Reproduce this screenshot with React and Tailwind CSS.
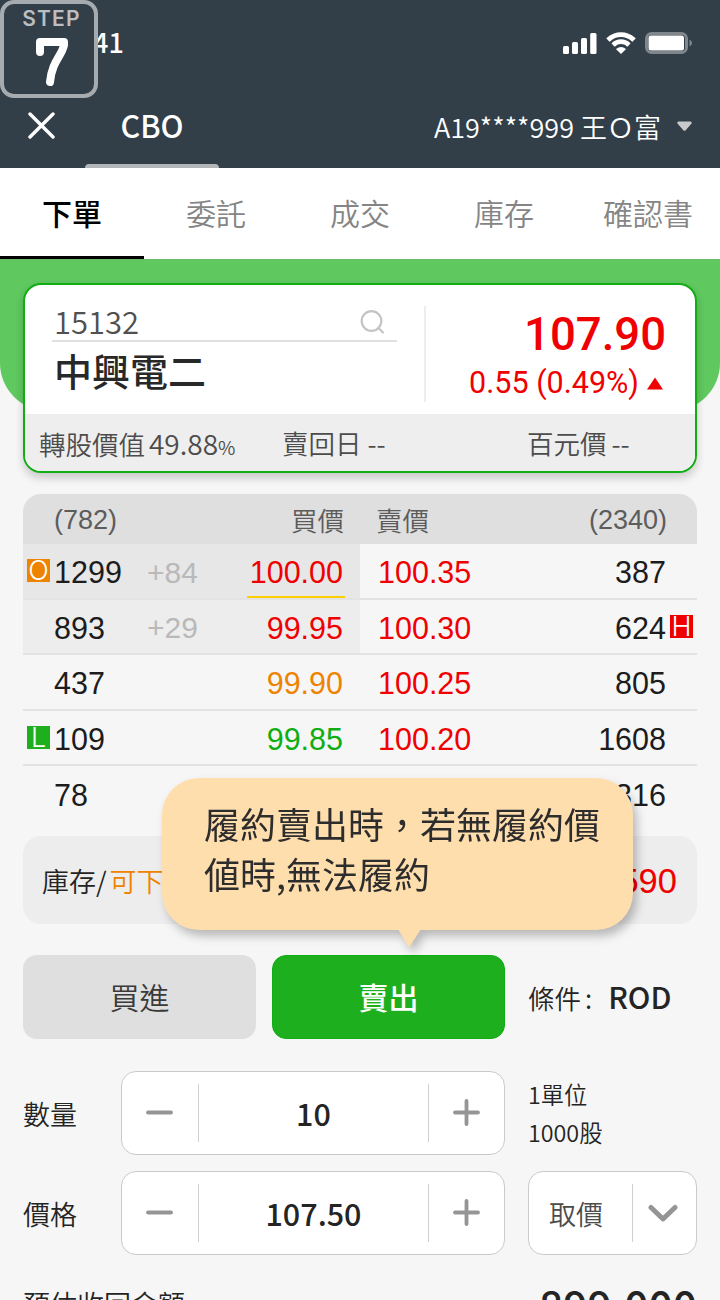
const CJK = "font-['Noto_Sans_CJK_TC',sans-serif]";
const ARIAL = "font-['Liberation_Sans','Noto_Sans_CJK_TC',sans-serif]";

const tabs = ["下單", "委託", "成交", "庫存", "確認書"];

const rows = [
  { bidQty: "1299", delta: "+84", bid: "100.00", bidColor: "text-[#f00000]", ask: "100.35", askQty: "387", left: "O", leftBg: "bg-[#ee8300]", shade: "bg-[#e7e7e7]", last: true },
  { bidQty: "893", delta: "+29", bid: "99.95", bidColor: "text-[#f00000]", ask: "100.30", askQty: "624", right: "H", shade: "bg-[#ededed]" },
  { bidQty: "437", bid: "99.90", bidColor: "text-[#ee8300]", ask: "100.25", askQty: "805" },
  { bidQty: "109", bid: "99.85", bidColor: "text-[#0eae12]", ask: "100.20", askQty: "1608", left: "L", leftBg: "bg-[#1eaf1e]" },
  { bidQty: "78", askQty: "316" },
];

function StepBadge() {
  return (
    <div className="absolute left-0 top-0 flex h-[98px] w-[98px] flex-col items-center rounded-[14px] border-4 border-[#a6abaf] bg-[#323e48]">
      <span className="mt-[3px] pl-[5px] font-['Inter',sans-serif] text-[21px] font-semibold leading-6 tracking-[1.2px] text-[#bcbfc1]">STEP</span>
      <svg className="ml-[6px] mt-[6px]" width="34" height="50" viewBox="0 0 34 50" fill="none" stroke="#fff" strokeWidth="8" strokeLinecap="round" strokeLinejoin="round">
        <path d="M5 15V5h24v3C27 19 17 24 15 45" />
      </svg>
    </div>
  );
}

function Header() {
  return (
    <header className="relative h-[168px] bg-[#323e48] text-white">
      <div className="flex h-[84px] items-center justify-between pl-[93px] pr-[27px] pt-0.5">
        <span className={`${CJK} -mt-[3px] text-[27px] font-medium leading-[40px]`}>41</span>
        <div className="flex items-center">
          <svg width="34" height="21" viewBox="0 0 34 21" fill="#fff">
            <rect x="0" y="13" width="6" height="8" rx="1.5" />
            <rect x="9" y="9" width="6" height="12" rx="1.5" />
            <rect x="18" y="5" width="6" height="16" rx="1.5" />
            <rect x="27.200" y="0" width="6.300" height="21" rx="1.5" />
          </svg>
          <svg className="ml-[9px]" width="30" height="22" viewBox="0 0 30 22" fill="#fff">
            <path d="M15 4.300c4.100 0 8 1.600 10.900 4.400.3.300.6.300.8 0l2.700-2.700c.3-.3.300-.6 0-.9C21.400-2.500 8.600-2.500.6 5.100c-.3.300-.3.600 0 .9l2.700 2.700c.2.300.5.300.8 0A15.800 15.800 0 0 1 15 4.300Z" transform="translate(0 .8)" />
            <path d="M15 11.800c2.200 0 4.300.8 5.900 2.300.3.200.6.200.8 0l2.500-2.600c.3-.2.300-.6 0-.8a13.300 13.300 0 0 0-18.400 0c-.3.200-.3.600 0 .8l2.500 2.600c.2.200.5.200.8 0a8.700 8.700 0 0 1 5.900-2.300Z" transform="translate(0 .3)" />
            <path d="m15 22 4.600-4.500c.2-.2.200-.5 0-.7a7.100 7.100 0 0 0-9.200 0c-.2.200-.2.500 0 .7L15 22Z" />
          </svg>
          <svg className="ml-[9px]" width="48" height="22" viewBox="0 0 48 22">
            <rect x="1.500" y="1.500" width="40" height="19" rx="5" fill="none" stroke="#7f868c" strokeWidth="3" />
            <rect x="3.500" y="3.500" width="35.500" height="15" rx="2.500" fill="#fff" />
            <path d="M44.500 7.500v7c1.500-.7 2.500-2 2.500-3.500s-1-2.800-2.500-3.500Z" fill="#7f868c" />
          </svg>
        </div>
      </div>
      <div className={`flex h-[84px] items-stretch ${CJK}`}>
        <div className="flex w-[85px] items-center pb-0.5 pl-7">
          <svg width="27" height="27" viewBox="0 0 27 27" stroke="#fff" strokeWidth="3.400" strokeLinecap="round">
            <path d="M2 2l23 23M25 2L2 25" />
          </svg>
        </div>
        <div className="flex w-[134px] flex-col items-center justify-between">
          <span className="mt-[18px] text-[30.500px] font-medium leading-[46px]">CBO</span>
          <i className="h-1 w-full rounded-t-sm bg-[#b3b6b8]" />
        </div>
        <div className="flex flex-1 items-center justify-end pr-7">
          <span className="pt-0.5 text-[27px] font-[350] leading-10">A19****999 王Ｏ富</span>
          <svg className="ml-4" width="15" height="11" viewBox="0 0 15 11">
            <path d="M2 .5h11c1.800 0 2.200 1.600 1.100 2.600L8.700 9.200c-.7.800-1.700.8-2.400 0L.9 3.100C-.2 2.100.3.500 2 .5Z" fill="#c8cacc" />
          </svg>
        </div>
      </div>
      <StepBadge />
    </header>
  );
}

function Tabs() {
  return (
    <nav className={`flex h-[91px] bg-white text-[30px] ${CJK}`}>
      {tabs.map((t, i) => (
        <div key={t} className={i === 0 ? "flex w-36 items-center justify-center border-b-[3px] border-black pt-px font-medium text-black" : "flex w-36 items-center justify-center pb-0.5 font-[350] text-[#858585]"}>
          {t}
        </div>
      ))}
    </nav>
  );
}

function QuoteCard() {
  return (
    <section className={`relative mx-[23px] -mt-32 flex h-[190px] flex-col overflow-hidden rounded-[18px] border-2 border-[#12ad15] bg-white shadow-[0_5px_9px_rgba(0,0,0,0.18)] ${CJK}`}>
      <div className="flex h-[129px]">
        <div className="ml-[27px] w-[345px]">
          <div className="flex h-[57px] items-start justify-between border-b-2 border-[#e0e0e0] pl-[2px] pr-[11px] pt-[14px]">
            <span className="text-[31px] font-[350] leading-[44px] text-[#505050]">15132</span>
            <svg className="mt-[10px]" width="26" height="26" viewBox="0 0 26 26" fill="none" stroke="#c4c4c4" strokeWidth="2.200" strokeLinecap="round">
              <circle cx="11.500" cy="12" r="9.800" />
              <path d="M18.500 19l4.500 4.500" />
            </svg>
          </div>
          <div className="pl-0.5 text-[38px] font-medium leading-[56px] text-[#282828]">中興電二</div>
        </div>
        <i className="ml-[27px] mt-[21px] h-24 w-0.5 bg-[#ededed]" />
        <div className="flex flex-1 flex-col items-end pr-[29px] font-['Roboto',sans-serif] text-[#f00000]">
          <span className="mt-[22px] text-[45.500px] font-medium leading-[56px]">107.90</span>
          <span className="flex items-center text-[30.500px] leading-10">
            0.55 (0.49%)
            <svg className="ml-[8px] mr-[3px]" width="16" height="13" viewBox="0 0 16 13"><path d="M8 .5l8 12H0z" fill="#f00000" /></svg>
          </span>
        </div>
      </div>
      <div className="flex flex-1 items-center bg-[#eee] pl-3.5 text-[26.500px] font-[350] text-[#4c4c4c]">
        <div className="flex w-[243px] items-baseline">轉股價值<span className="ml-1 text-[28px]">49.88</span><span className="text-[19px]">%</span></div>
        <div className="w-[245px]">賣回日<span className="ml-[6px]">--</span></div>
        <div>百元價<span className="ml-[5px]">--</span></div>
      </div>
    </section>
  );
}

function Mark({ letter, color }) {
  return (
    <span className={`flex h-[23px] w-[23px] items-center justify-center font-['Inter',sans-serif] text-[27px] font-light leading-[23px] text-white ${color}`}>{letter}</span>
  );
}

function OrderBook() {
  return (
    <section className={`mx-[23px] mt-[21px] overflow-hidden rounded-t-[18px] ${ARIAL}`}>
      <div className="flex h-[50px] items-center bg-[#dfdfdf] text-[27px] text-[#5c5c5c]">
        <div className="flex w-[337px] items-center justify-between pl-[31px] pr-[16px]"><span className="pt-0.5">(782)</span><span className={`${CJK} pt-0.5 text-[26.500px] font-[350]`}>買價</span></div>
        <div className="flex flex-1 items-center justify-between pl-4 pr-[30px]"><span className={`${CJK} pt-0.5 text-[26.500px] font-[350]`}>賣價</span><span className="pt-0.5">(2340)</span></div>
      </div>
      {rows.map((r, i) => (
        <div key={r.bidQty} className={`flex text-[30.500px] text-[#1c1c1c] ${i < 4 ? "h-[55.600px] border-b-2 border-[#e3e3e3]" : "h-[54.600px]"}`}>
          <div className={`flex w-[337px] items-center pr-[17px] ${r.shade || ""}`}>
            <div className="flex w-[31px] pl-1">{r.left && <Mark letter={r.left} color={r.leftBg} />}</div>
            <span className="w-[93px] pt-1">{r.bidQty}</span>
            <span className="pt-[3px] text-[30px] text-[#b9b9b9]">{r.delta}</span>
            {r.bid && <span className={`ml-auto self-stretch leading-[56px] ${r.bidColor} ${r.last ? "-mr-0.5 border-b-2 border-[#ffce00] pl-[3px] pr-0.5" : ""}`}>{r.bid}</span>}
          </div>
          <div className="flex flex-1 items-center pl-[18px]">
            <span className="pt-1 text-[#f00000]">{r.ask}</span>
            <span className="ml-auto pt-1">{r.askQty}</span>
            <div className="flex w-[31px] pl-1">{r.right && <Mark letter={r.right} color="bg-[#ee0000]" />}</div>
          </div>
        </div>
      ))}
    </section>
  );
}

function Tip() {
  return (
    <div className={`absolute left-[162px] top-[778px] h-[152px] w-[471px] rounded-[37px] bg-[#ffdeae] pl-[42px] pt-[20px] text-[36px] leading-[50px] text-[#2d2d2d] drop-shadow-[4px_6px_5px_rgba(0,0,0,0.25)] ${CJK}`}>
      <p lang="zh-Hant">履約賣出時，若無履約價<br />値時,無法履約</p>
      <svg className="absolute left-[235px] top-[151px]" width="24" height="19" viewBox="0 0 24 19"><path d="M1 0h23L12 18.500z" fill="#ffdeae" /></svg>
    </div>
  );
}

function Stepper({ value }) {
  return (
    <div className="flex h-[84px] w-96 items-center rounded-[15px] border border-[#cacaca] bg-white text-[#242424]">
      <div className="flex w-[76px] justify-center">
        <svg width="28" height="28" viewBox="0 0 28 28" stroke="#959595" strokeWidth="3.800" strokeLinecap="round"><path d="M2 13.500h23" /></svg>
      </div>
      <i className="h-[58px] w-px bg-[#cfcfcf]" />
      <span className="flex-1 text-center text-[30.500px] font-medium leading-[44px]">{value}</span>
      <i className="h-[58px] w-px bg-[#cfcfcf]" />
      <div className="flex w-[75px] justify-center">
        <svg width="28" height="28" viewBox="0 0 28 28" stroke="#959595" strokeWidth="3.800" strokeLinecap="round"><path d="M2 13.500h23M13.500 2v23" /></svg>
      </div>
    </div>
  );
}

function OrderForm() {
  return (
    <section className={`mx-[23px] text-[27px] font-[350] text-[#242424] ${CJK}`}>
      <div className="mt-[15px] flex h-[88px] items-center justify-between rounded-[18px] bg-[#ededed] pl-[19px] pr-5 pt-[3px]">
        <span>庫存/<span className="ml-[3px] text-[#ee8300]">可下單</span></span>
        <span className={`${ARIAL} text-[34.500px] font-normal text-[#f00000]`}>590</span>
      </div>
      <div className="mt-[31px] flex h-[84px] items-center text-[30px]">
        <button className="h-full w-[233px] rounded-[14px] bg-[#dfdfdf] text-[#3a3a3a]">買進</button>
        <button className="ml-4 h-full w-[233px] rounded-[14px] border border-[#0eae12] bg-[#1eaf1e] font-medium text-white">賣出</button>
        <span className="ml-[23px] pt-0.5 text-[26.500px]">條件<span className="ml-[4px]">:</span></span>
        <span className="ml-[16px] text-[30px] font-medium">ROD</span>
      </div>
      <div className="mt-8 flex items-center">
        <span className="w-[98px] pt-0.5">數量</span>
        <Stepper value="10" />
        <div className="ml-[23px] text-[23.300px] leading-[38px]">1單位<br />1000股</div>
      </div>
      <div className="mt-4 flex items-center">
        <span className="w-[98px] pt-0.5">價格</span>
        <Stepper value="107.50" />
        <div className="ml-[23px] flex h-[84px] flex-1 items-center rounded-[15px] border border-[#cacaca] bg-white pl-5 text-[#4c4c4c]">
          <span className="w-[83px] pt-[3px]">取價</span>
          <i className="h-[58px] w-px bg-[#cfcfcf]" />
          <svg className="ml-[15px]" width="30" height="18" viewBox="0 0 30 18" fill="none" stroke="#959595" strokeWidth="5" strokeLinecap="round" strokeLinejoin="round"><path d="M3 3.500l12 11.500L27 3.500" /></svg>
        </div>
      </div>
      <div className="mt-[19px] flex items-center justify-between">
        <span>預估收回金額</span>
        <span className="text-[42.500px] font-medium leading-[60px]">899,000</span>
      </div>
    </section>
  );
}

export default function App() {
  return (
    <main className="relative h-[1300px] w-[720px] overflow-hidden bg-[#f6f6f6]">
      <Header />
      <Tabs />
      <div className="h-[152px] rounded-b-[48px] border-t border-[#6cb86c] bg-[#5fc85f]" />
      <QuoteCard />
      <OrderBook />
      <OrderForm />
      <Tip />
    </main>
  );
}
